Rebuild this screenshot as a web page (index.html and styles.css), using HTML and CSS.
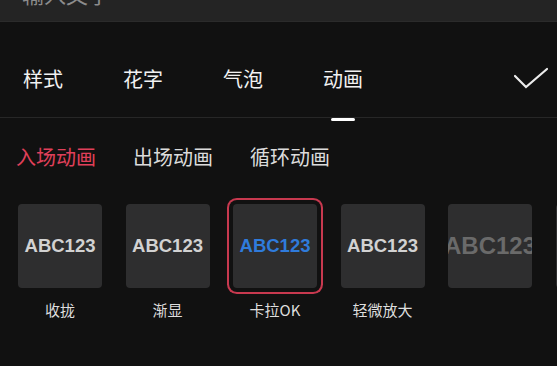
FILE: index.html
```html
<!DOCTYPE html>
<html lang="zh">
<head>
<meta charset="utf-8">
<link rel="stylesheet" href="styles.css">
</head>
<body>
<div class="input"><span class="placeholder">输入文字</span></div>
<div class="tabs">
  <span class="tab">样式</span>
  <span class="tab">花字</span>
  <span class="tab">气泡</span>
  <span class="tab active">动画<i class="indicator"></i></span>
  <svg class="check" width="36" height="26" viewBox="0 0 36 26"><polyline points="2,9 13,20 34,2" fill="none" stroke="#ececec" stroke-width="2.2" stroke-linecap="round" stroke-linejoin="miter"/></svg>
</div>
<div class="subtabs">
  <span class="sub on">入场动画</span>
  <span class="sub">出场动画</span>
  <span class="sub">循环动画</span>
</div>
<div class="items">
  <div class="item"><div class="tile"><span class="abc">ABC123</span></div><div class="label">收拢</div></div>
  <div class="item"><div class="tile"><span class="abc">ABC123</span></div><div class="label">渐显</div></div>
  <div class="item"><div class="tile selected"><span class="abc blue">ABC123</span></div><div class="label">卡拉OK</div></div>
  <div class="item"><div class="tile"><span class="abc">ABC123</span></div><div class="label">轻微放大</div></div>
  <div class="item"><div class="tile"><span class="abc big">ABC123</span></div><div class="label"></div></div>
  <div class="item"><div class="tile"></div><div class="label"></div></div>
</div>
</body>
</html>
```
FILE: styles.css
```css
html, body {
  margin: 0;
  padding: 0;
  background: #111111;
  width: 557px;
  height: 366px;
  overflow: hidden;
  font-family: "Noto Sans CJK SC", "Noto Sans", sans-serif;
}
.input {
  height: 21px;
  background: #242424;
  border-bottom: 1px solid #2b2b2b;
  overflow: hidden;
  padding-left: 22px;
}
.placeholder {
  display: block;
  margin-top: -22px;
  font-size: 22px;
  line-height: 30px;
  color: #8c8c8c;
}
.tabs {
  display: flex;
  align-items: center;
  padding-left: 23px;
  padding-right: 8px;
  border-bottom: 1px solid #272727;
  box-sizing: border-box;
  height: 96px;
}
.tab {
  font-size: 20px;
  line-height: 28px;
  color: #f2f2f2;
  margin-right: 60px;
  position: relative;
  margin-top: 18px;
}
.indicator {
  position: absolute;
  left: 8px;
  top: 53px;
  width: 24px;
  height: 3px;
  border-radius: 2px;
  background: #ffffff;
}
.check {
  margin-left: auto;
  margin-top: 20px;
  margin-right: 0;
}
.subtabs {
  display: flex;
  gap: 37px;
  padding: 25px 0 0 16px;
}
.sub {
  font-size: 20px;
  line-height: 28px;
  color: #dcdcdc;
}
.sub.on {
  color: #e0405a;
}
.items {
  display: flex;
  gap: 23.5px;
  padding: 33px 0 0 18px;
  overflow: hidden;
}
.item {
  flex: 0 0 84px;
  display: flex;
  flex-direction: column;
  align-items: center;
}
.tile {
  width: 84px;
  height: 84px;
  border-radius: 4px;
  background: #2e2e2f;
  display: flex;
  align-items: center;
  justify-content: center;
  overflow: hidden;
}
.tile.selected {
  box-shadow: 0 0 0 4px #111111, 0 0 0 6px #c8394f;
}
.abc {
  font-family: "Liberation Sans", Arial, sans-serif;
  font-weight: bold;
  font-size: 18.5px;
  color: #d2d2d2;
  white-space: nowrap;
}
.abc.blue {
  color: #2f7bdb;
}
.abc.big {
  font-size: 24px;
  color: #6a6a6a;
}
.label {
  margin-top: 12px;
  font-size: 15px;
  line-height: 20px;
  height: 20px;
  color: #dedede;
  white-space: nowrap;
}
```
